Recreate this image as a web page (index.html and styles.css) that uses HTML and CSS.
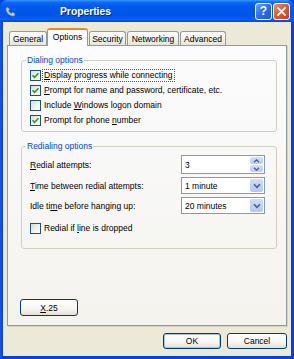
FILE: index.html
```html
<!DOCTYPE html>
<html>
<head>
<meta charset="utf-8">
<link rel="stylesheet" href="styles.css">
</head>
<body>
<div class="window">
  <div class="titlebar">
    <svg class="ticon" width="11" height="11" viewBox="0 0 11 11">
      <path d="M1 3 C1 1.5 2.5 1 3.5 2 L4.5 3.5 L3.5 4.5 C4 6 5 7 6.5 7.5 L7.5 6.5 L9.5 7.5 C10.5 8.5 9.5 10 8 10 C4 9.5 1.5 7 1 3 Z" fill="#c9ccd4" stroke="#8d95a8" stroke-width="0.7"/>
    </svg>
    <span class="title">Properties</span>
    <div class="tbtns">
      <div class="tb help">?</div>
      <div class="tb close">
        <svg width="9" height="9" viewBox="0 0 9 9"><path d="M1 1 L8 8 M8 1 L1 8" stroke="#fff" stroke-width="1.8" stroke-linecap="round"/></svg>
      </div>
    </div>
  </div>
  <div class="client">
    <div class="tabs">
      <div class="tab t-general">General</div>
      <div class="tab sel t-options">Options</div>
      <div class="tab t-security">Security</div>
      <div class="tab t-network">Networking</div>
      <div class="tab t-advanced">Advanced</div>
    </div>
    <div class="panel">
      <fieldset class="group g1">
        <legend>Dialing options</legend>
        <div class="chk">
          <span class="box"><svg width="9" height="9" viewBox="0 0 9 9"><path d="M1.5 4.2 L3.5 6.3 L7.5 2.2" fill="none" stroke="#21a121" stroke-width="1.6"/></svg></span>
          <span class="lbl focus"><u>D</u>isplay progress while connecting</span>
        </div>
        <div class="chk">
          <span class="box"><svg width="9" height="9" viewBox="0 0 9 9"><path d="M1.5 4.2 L3.5 6.3 L7.5 2.2" fill="none" stroke="#21a121" stroke-width="1.6"/></svg></span>
          <span class="lbl"><u>P</u>rompt for name and password, certificate, etc.</span>
        </div>
        <div class="chk">
          <span class="box"></span>
          <span class="lbl">Include <u>W</u>indows logon domain</span>
        </div>
        <div class="chk">
          <span class="box"><svg width="9" height="9" viewBox="0 0 9 9"><path d="M1.5 4.2 L3.5 6.3 L7.5 2.2" fill="none" stroke="#21a121" stroke-width="1.6"/></svg></span>
          <span class="lbl">Prompt for phone <u>n</u>umber</span>
        </div>
      </fieldset>
      <fieldset class="group g2">
        <legend>Redialing options</legend>
        <div class="form">
          <span class="flabel"><u>R</u>edial attempts:</span>
          <div class="spin">
            <span class="val">3</span>
            <div class="arrows">
              <span class="sbtn"><svg width="7" height="4" viewBox="0 0 7 4"><path d="M1 3.3 L3.5 0.8 L6 3.3" fill="none" stroke="#4d6185" stroke-width="1.3"/></svg></span>
              <span class="sbtn"><svg width="7" height="4" viewBox="0 0 7 4"><path d="M1 0.7 L3.5 3.2 L6 0.7" fill="none" stroke="#4d6185" stroke-width="1.3"/></svg></span>
            </div>
          </div>
          <span class="flabel"><u>T</u>ime between redial attempts:</span>
          <div class="combo">
            <span class="val">1 minute</span>
            <span class="cbtn"><svg width="8" height="6" viewBox="0 0 8 6"><path d="M1 1.3 L4 4.3 L7 1.3" fill="none" stroke="#4d6185" stroke-width="1.6"/></svg></span>
          </div>
          <span class="flabel">Idle ti<u>m</u>e before hanging up:</span>
          <div class="combo">
            <span class="val">20 minutes</span>
            <span class="cbtn"><svg width="8" height="6" viewBox="0 0 8 6"><path d="M1 1.3 L4 4.3 L7 1.3" fill="none" stroke="#4d6185" stroke-width="1.6"/></svg></span>
          </div>
        </div>
        <div class="chk chk2">
          <span class="box"></span>
          <span class="lbl">Redial if <u>l</u>ine is dropped</span>
        </div>
      </fieldset>
      <button class="btn x25"><u>X</u>.25</button>
    </div>
    <div class="buttons">
      <button class="btn ok">OK</button>
      <button class="btn cancel">Cancel</button>
    </div>
  </div>
</div>
</body>
</html>
```

FILE: styles.css
```css
html, body {
  margin: 0;
  padding: 0;
  background: #0b3fd8;
}

body {
  width: 294px;
  height: 359px;
  overflow: hidden;
  font-family: "Liberation Sans", Arial, sans-serif;
  font-size: 8.5px;
  color: #000;
}

.window {
  width: 294px;
  height: 359px;
  display: flex;
  flex-direction: column;
  background: linear-gradient(to right, #1a55e6 0px, #0a3fd8 3px, #0a3fd8 291px, #0a3fd8 100%);
  border-radius: 7px 7px 0 0;
  overflow: hidden;
}

.titlebar {
  height: 22px;
  flex: none;
  display: flex;
  align-items: center;
  background: linear-gradient(to bottom, #3e98ff 0%, #0d6bf6 10%, #0058ee 30%, #0055e7 70%, #0a5ff4 88%, #0646c8 100%);
}

.ticon {
  margin-left: 5px;
  margin-top: 1px;
  flex: none;
}

.title {
  margin-left: 44px;
  margin-top: 1px;
  font-size: 10.3px;
  font-weight: bold;
  color: #fff;
  text-shadow: 1px 1px 0 #0a2c8c;
}

.tbtns {
  margin-left: auto;
  margin-right: 4px;
  display: flex;
  gap: 1px;
}

.tb {
  width: 17px;
  height: 17px;
  box-sizing: border-box;
  border: 1px solid #fff;
  border-radius: 3px;
  display: flex;
  align-items: center;
  justify-content: center;
}

.help {
  background: linear-gradient(135deg, #6ea2ff 0%, #2f6ff0 45%, #1c56d8 100%);
  color: #fff;
  font-weight: bold;
  font-size: 12px;
  line-height: 1;
}

.close {
  background: linear-gradient(135deg, #f0916c 0%, #e15a31 45%, #c8411c 100%);
}

.client {
  flex: 1;
  margin: 0 3px 3px;
  background: #ece9d8;
  padding: 6px 4px 0 4px;
  display: flex;
  flex-direction: column;
}

.tabs {
  height: 17px;
  display: flex;
  align-items: flex-end;
  flex: none;
}

.tab {
  height: 14px;
  box-sizing: border-box;
  border: 1px solid #919b9c;
  border-bottom: none;
  border-radius: 3px 3px 0 0;
  background: linear-gradient(#fefefe, #f0efe8 60%, #e6e4da);
  display: flex;
  align-items: center;
  justify-content: center;
  margin-left: 1px;
  padding-top: 1px;
}

.tab.sel {
  height: 18px;
  margin-bottom: -1px;
  position: relative;
  z-index: 2;
  background: #fcfcfe;
  border-top: 2px solid #e68b2c;
  padding-top: 0;
  padding-bottom: 3px;
  margin-left: 0;
}

.t-general { width: 38px; margin-left: 2px; }
.t-options { width: 41px; }
.t-security { width: 37px; margin-left: 1px; }
.t-network { width: 52px; margin-left: 1px; }
.t-advanced { width: 46px; }

.panel {
  height: 281px;
  box-sizing: border-box;
  border: 1px solid #919b9c;
  background: linear-gradient(#fcfcfe, #f4f3ee);
  box-shadow: 1px 1px 0 #d5d2c2;
  display: flex;
  flex-direction: column;
  align-items: flex-start;
  flex: none;
}

.group {
  align-self: stretch;
  margin: 8px 9px 0 13px;
  border: 1px solid #d0d0bf;
  border-radius: 3px;
  padding: 1px 11px 3px 8px;
  min-width: 0;
}

.group legend {
  margin-left: -4px;
  padding: 0 1px;
  line-height: 13px;
  color: #0046d5;
}

.chk {
  display: flex;
  align-items: center;
  height: 15px;
}

.box {
  width: 11px;
  height: 11px;
  box-sizing: border-box;
  border: 1px solid #1c5180;
  background: linear-gradient(135deg, #dcdcd7 0%, #f4f4f0 60%, #ffffff 100%);
  display: flex;
  align-items: center;
  justify-content: center;
  flex: none;
}

.lbl {
  margin-left: 1px;
  padding: 0 1px;
  border: 1px dotted transparent;
  line-height: 11px;
}

.lbl.focus {
  border-color: #555;
}

.g2 {
  padding-top: 2px;
  padding-bottom: 12px;
}

.form {
  display: grid;
  grid-template-columns: 1fr 84px;
  grid-template-rows: 19px 17px 17px;
  row-gap: 3px;
  align-items: center;
}

.flabel {
  white-space: nowrap;
}

.spin, .combo {
  height: 100%;
  box-sizing: border-box;
  border: 1px solid #7f9db9;
  background: #fff;
  display: flex;
  align-items: center;
  padding: 1px;
}

.val {
  flex: 1;
  padding-left: 2px;
}

.arrows {
  width: 13px;
  height: 100%;
  display: flex;
  flex-direction: column;
  gap: 1px;
}

.sbtn {
  flex: 1;
  background: linear-gradient(#d3e0fc, #b8cbf6);
  border-radius: 2px;
  display: flex;
  align-items: center;
  justify-content: center;
}

.cbtn {
  width: 13px;
  height: 100%;
  background: linear-gradient(#cfdcfc, #b3c7f6);
  border-radius: 2px;
  display: flex;
  align-items: center;
  justify-content: center;
}

.chk2 {
  margin-top: 7px;
}

.btn {
  font-family: "Liberation Sans", Arial, sans-serif;
  font-size: 8.5px;
  color: #000;
  box-sizing: border-box;
  border: 1px solid #003c74;
  border-radius: 3px;
  background: linear-gradient(#ffffff 0%, #f6f5f1 60%, #e3e0d6 100%);
  padding: 0;
  margin: 0;
}

.x25 {
  width: 58px;
  height: 17px;
  margin: 50px 0 0 12px;
}

.buttons {
  display: flex;
  justify-content: flex-end;
  gap: 6px;
  margin-top: 7px;
}

.ok {
  width: 58px;
  height: 16px;
  box-shadow: inset 0 0 0 1px #a9c1ee;
}

.cancel {
  width: 60px;
  height: 16px;
}
```
